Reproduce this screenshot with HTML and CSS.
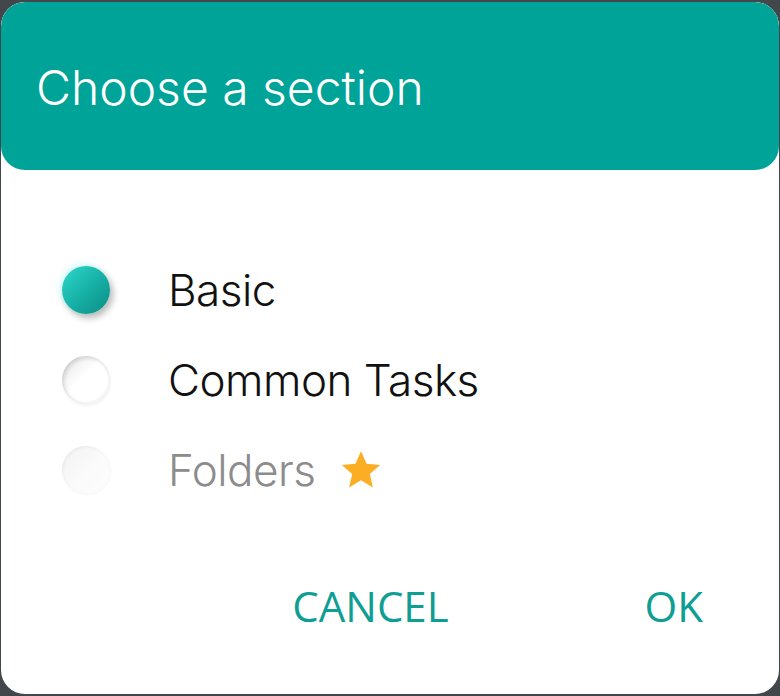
FILE: index.html
```html
<!DOCTYPE html>
<html>
<head>
<meta charset="utf-8">
<link rel="stylesheet" href="styles.css">
</head>
<body>
<div class="dialog">
  <div class="header"><h1 class="title">Choose a section</h1></div>
  <div class="options">
    <div class="option">
      <span class="radio radio-on"></span>
      <span class="label">Basic</span>
    </div>
    <div class="option">
      <span class="radio radio-off"></span>
      <span class="label">Common Tasks</span>
    </div>
    <div class="option option-disabled">
      <span class="radio radio-disabled"></span>
      <span class="label">Folders</span>
      <svg class="star" viewBox="0 0 24 24" width="46" height="46"><path d="M12 2.2l2.9 6.6 7.1.6-5.4 4.7 1.6 7-6.2-3.7-6.2 3.7 1.6-7L2 9.4l7.1-.6z" fill="#fbad23"/></svg>
    </div>
  </div>
  <div class="actions">
    <span class="btn btn-cancel">CANCEL</span>
    <span class="btn btn-ok">OK</span>
  </div>
</div>
</body>
</html>
```

FILE: styles.css
```css
html, body {
  margin: 0;
  padding: 0;
  background: #41474a;
}
body {
  width: 780px;
  height: 696px;
  overflow: hidden;
}
.dialog {
  margin: 2px 1px 0 1px;
  height: 692px;
  background: #ffffff;
  border-radius: 24px;
  display: flex;
  flex-direction: column;
  overflow: hidden;
}
.header {
  height: 168px;
  background: #00a398;
  border-radius: 24px;
  display: flex;
  align-items: center;
  padding-left: 35px;
  flex-shrink: 0;
}
.title {
  margin: 0;
  font-family: Inter, "Liberation Sans", sans-serif;
  font-weight: 300;
  font-size: 48px;
  color: #ffffff;
  padding-top: 2px;
}
.options {
  padding-top: 75px;
  display: flex;
  flex-direction: column;
}
.option {
  height: 90px;
  display: flex;
  align-items: center;
  padding-left: 61px;
}
.radio {
  width: 48px;
  height: 48px;
  border-radius: 50%;
  flex-shrink: 0;
  margin-right: 58px;
}
.radio-on {
  background: linear-gradient(135deg, #2fd8cc 0%, #17b1a7 50%, #0d8c84 100%);
  box-shadow: 3px 4px 7px rgba(0, 0, 0, 0.28), -2px -2px 6px rgba(120, 240, 230, 0.35);
}
.radio-off {
  background: linear-gradient(135deg, #e6e6e6 0%, #ffffff 45%, #ffffff 100%);
  box-shadow: inset 2px 2px 4px rgba(0, 0, 0, 0.14), inset -1px -1px 3px rgba(0, 0, 0, 0.06), 1px 2px 3px rgba(0, 0, 0, 0.05);
}
.radio-disabled {
  background: linear-gradient(135deg, #f2f2f2 0%, #fafafa 50%, #fdfdfd 100%);
  box-shadow: inset 1px 1px 3px rgba(0, 0, 0, 0.06), 1px 1px 3px rgba(0, 0, 0, 0.04);
}
.label {
  font-family: Inter, "Liberation Sans", sans-serif;
  font-weight: 300;
  font-size: 44px;
  color: #111111;
  letter-spacing: -0.5px;
}
.option-disabled .label {
  color: #8c8c8c;
}
.star {
  margin-left: 22px;
  margin-top: 0;
}
.actions {
  display: flex;
  justify-content: flex-end;
  align-items: center;
  padding-top: 62px;
  padding-right: 76px;
}
.btn {
  font-family: "Open Sans", "Liberation Sans", sans-serif;
  font-size: 42px;
  color: #0f9e94;
}
.btn-ok {
  margin-left: 196px;
}
```
